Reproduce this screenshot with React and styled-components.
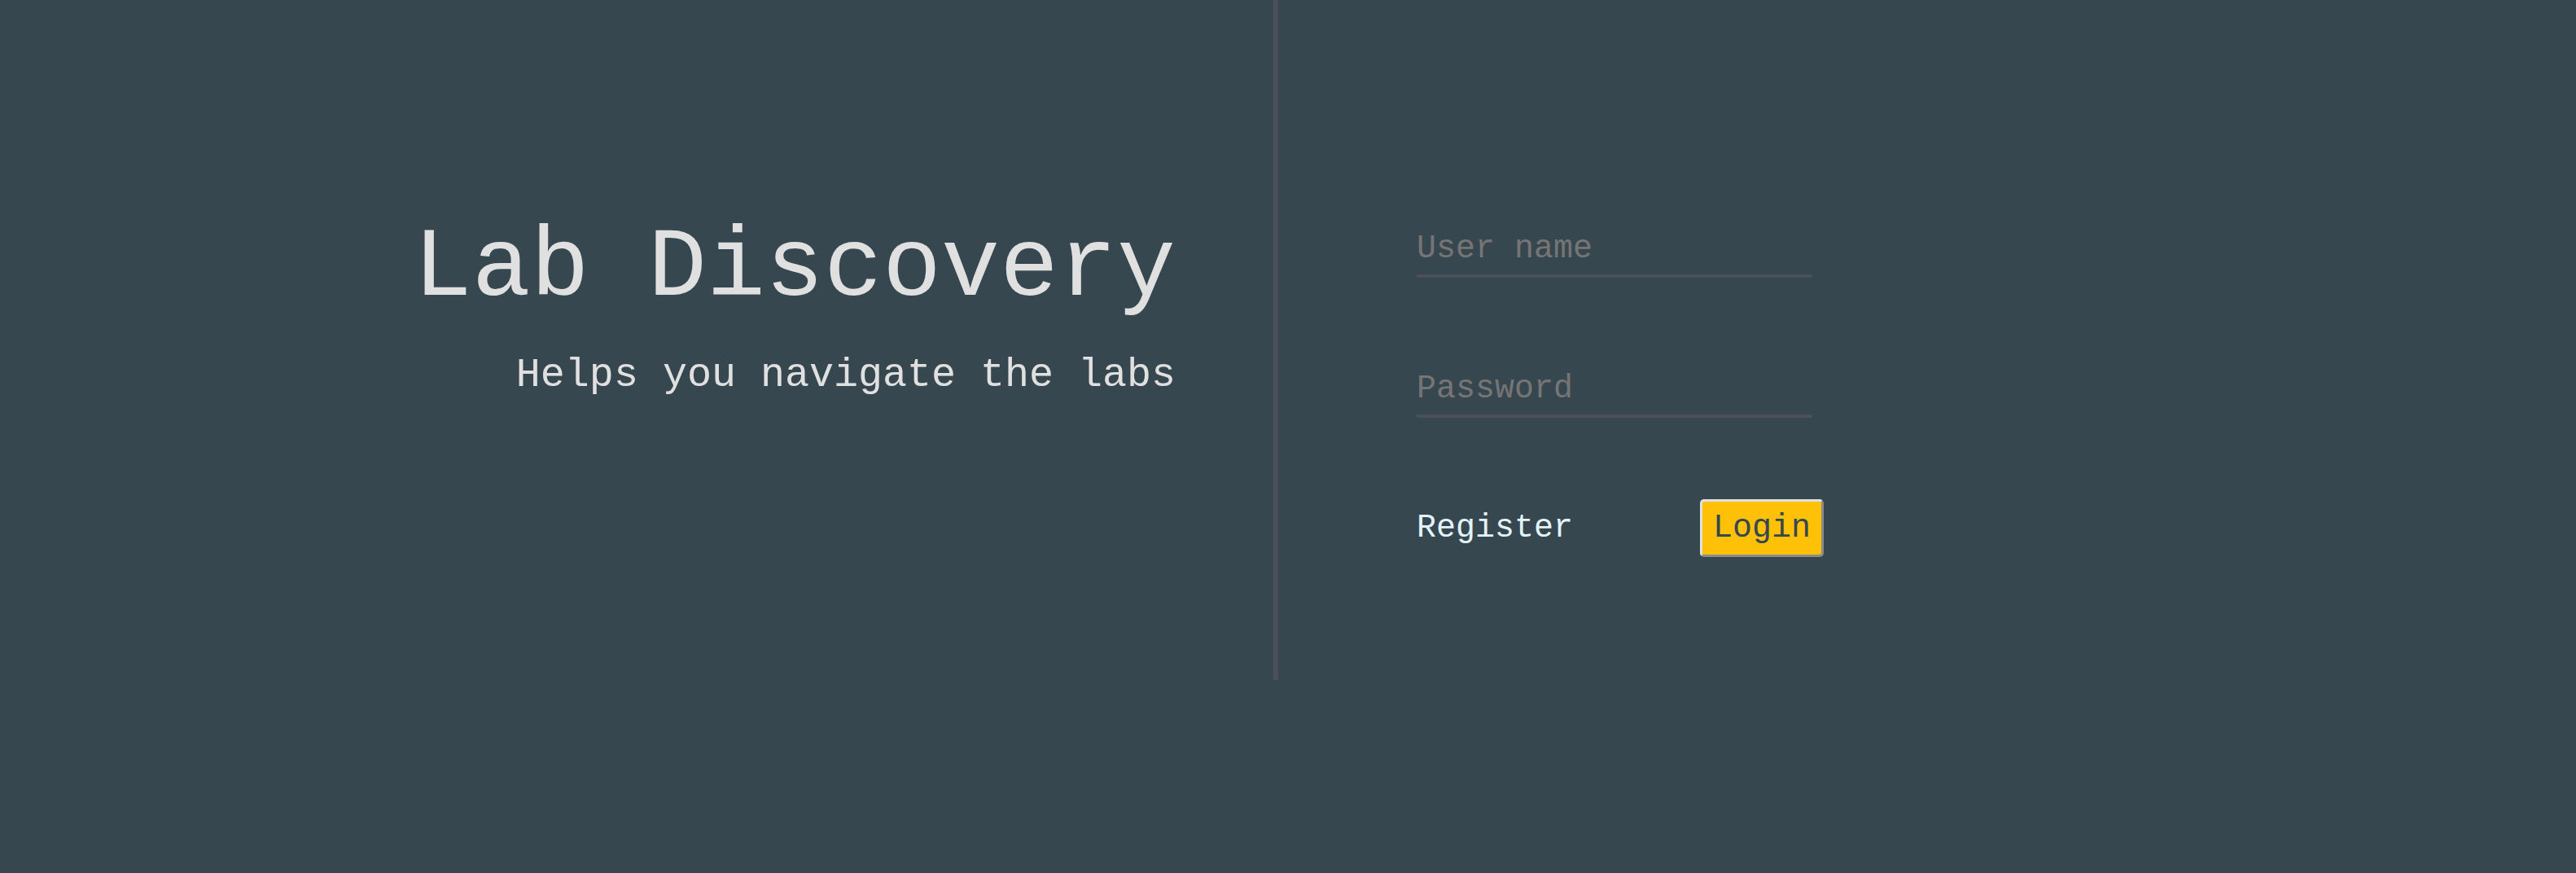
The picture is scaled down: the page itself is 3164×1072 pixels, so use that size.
import styled, { createGlobalStyle } from "styled-components";

const GlobalStyle = createGlobalStyle`
  html, body {
    margin: 0;
    padding: 0;
    background: #37474f;
  }
  body {
    font-family: "Liberation Mono", "Courier New", monospace;
  }
`;

const Page = styled.div`
  display: grid;
  grid-template-columns: 1570px 1fr;
  height: 835px;
  min-width: 3164px;
`;

const Intro = styled.section`
  box-sizing: border-box;
  border-right: 6px solid #4a4f5a;
  padding: 258px 120px 0 0;
  text-align: right;
  color: #e0e0e0;
`;

const Title = styled.h1`
  margin: 0;
  font-size: 120px;
  line-height: 144px;
  font-weight: normal;
`;

const Subtitle = styled.p`
  margin: 29px 0 0;
  font-size: 50px;
  line-height: 60px;
`;

const Form = styled.form`
  display: flex;
  flex-direction: column;
  align-items: flex-start;
  padding: 283px 0 0 170px;
`;

const Field = styled.input`
  box-sizing: content-box;
  width: 486px;
  height: 45px;
  margin: 0 0 ${(p) => p.$gap}px;
  padding: 0 0 9px;
  border: none;
  border-bottom: 4px solid #4a4f5a;
  background: transparent;
  outline: none;
  font-family: inherit;
  font-size: 40px;
  line-height: 45px;
  color: #e0e0e0;

  &::placeholder {
    color: #757575;
  }
`;

const Actions = styled.div`
  display: flex;
  align-items: center;
  gap: 156px;
`;

const LinkButton = styled.button`
  padding: 0;
  border: none;
  background: none;
  font-family: inherit;
  font-size: 40px;
  line-height: 45px;
  color: #e3f2fd;
  cursor: pointer;
`;

const Submit = styled.button`
  box-sizing: border-box;
  width: 152px;
  height: 71px;
  padding: 10px 13px;
  border: 3px solid;
  border-color: #e0e0e0 #8c8c8c #8c8c8c #e0e0e0;
  border-radius: 5px;
  background: #ffc107;
  font-family: inherit;
  font-size: 40px;
  line-height: 45px;
  color: #37474f;
  cursor: pointer;
`;

export default function App() {
  return (
    <>
      <GlobalStyle />
      <Page>
        <Intro>
          <Title>Lab Discovery</Title>
          <Subtitle>Helps you navigate the labs</Subtitle>
        </Intro>
        <Form onSubmit={(e) => e.preventDefault()}>
          <Field type="text" placeholder="User name" $gap={114} />
          <Field type="password" placeholder="Password" $gap={100} />
          <Actions>
            <LinkButton type="button">Register</LinkButton>
            <Submit type="submit">Login</Submit>
          </Actions>
        </Form>
      </Page>
    </>
  );
}
